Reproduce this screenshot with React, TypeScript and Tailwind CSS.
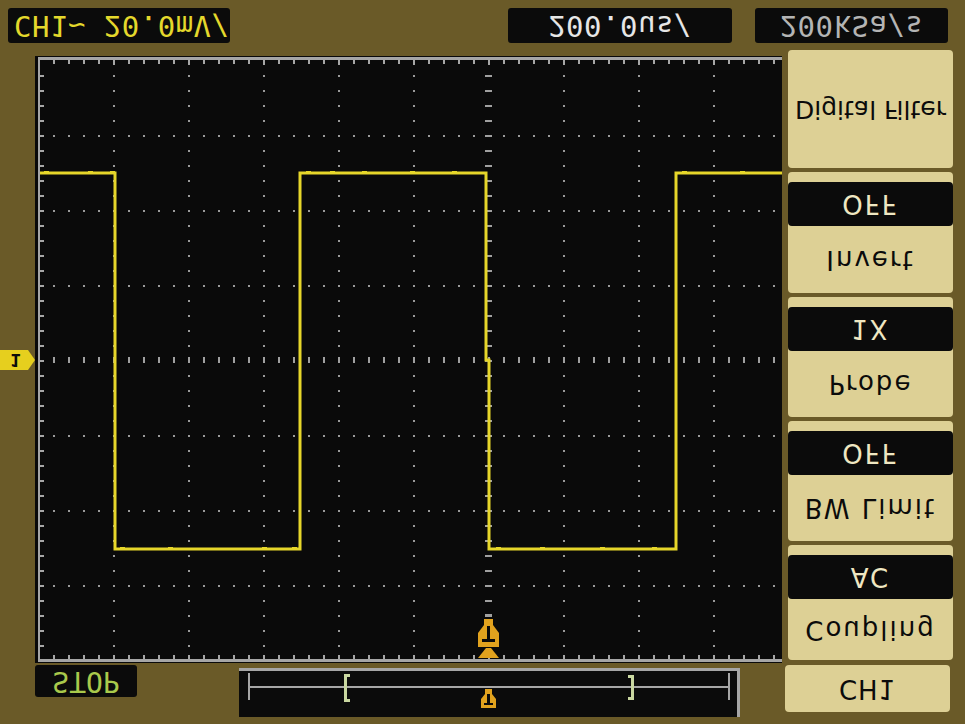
import React from "react";

const flip = "inline-block leading-none whitespace-nowrap [transform:scaleY(-1)]";
const mono = "font-['DejaVu_Sans_Mono',monospace]";
const sans = "font-['DejaVu_Sans',sans-serif]";

const GRID_LEFT = 38;
const GRID_TOP = 60;
const STEP = 15;
const RIGHT = 782;
const BOTTOM = 660;

const subX = Array.from({ length: 50 }, (_, i) => GRID_LEFT + STEP * i).filter((x) => x > GRID_LEFT && x < RIGHT);
const subY = Array.from({ length: 41 }, (_, i) => GRID_TOP + STEP * i).filter((y) => y > GRID_TOP && y < BOTTOM);
const divX = [113, 188, 263, 338, 413, 563, 638, 713];
const divY = [135, 210, 285, 435, 510, 585];

// little glitches riding on the flat parts of the square wave
const bumps: [number, number][] = [
  [44, 171], [88, 171], [110, 171], [306, 171], [330, 171], [362, 171], [410, 171], [452, 171],
  [682, 171], [740, 171], [120, 547], [168, 547], [262, 547], [292, 547], [496, 547], [540, 547],
  [600, 547], [652, 547],
];

function Readout({ children, className, color }: { children: React.ReactNode; className?: string; color: string }) {
  return (
    <div className={`flex h-[35px] items-center rounded-[3px] bg-[#0b0b0b] ${className ?? ""}`}>
      <span className={`${flip} ${mono} text-[29px] tracking-[0.5px]`} style={{ color }}>
        {children}
      </span>
    </div>
  );
}

function MenuItem({ label, value, height, tight }: { label: string; value?: string; height: number; tight?: boolean }) {
  return (
    <div className="flex w-[165px] flex-col overflow-hidden rounded-[4px] bg-[#ddd095]" style={{ height }}>
      {value && (
        <div className="mt-[10px] flex h-[44px] items-center justify-center rounded-[4px] bg-[#0b0b0b]">
          <span className={`${flip} ${sans} text-[26px] tracking-[2px] text-[#efe7c2]`}>{value}</span>
        </div>
      )}
      <div className="flex flex-1 items-center justify-center">
        <span
          className={`${flip} ${sans} text-[#0b0b0b] ${tight ? "text-[25px] tracking-[0px]" : "text-[26px] tracking-[2px]"}`}
        >
          {label}
        </span>
      </div>
    </div>
  );
}

function Screen() {
  return (
    <svg width={747} height={607} viewBox="35 56 747 607" className="mt-[6px] block">
      <rect x={35} y={56} width={747} height={607} fill="#0a0a0a" />
      {/* border */}
      <rect x={38} y={57} width={744} height={3} fill="#a6a6a6" />
      <rect x={38} y={57} width={2} height={605} fill="#a6a6a6" />
      <rect x={38} y={659} width={744} height={3} fill="#a6a6a6" />
      {subX.map((x) => (
        <g key={`bt${x}`}>
          <rect x={x} y={60} width={2} height={(x - GRID_LEFT) % 75 === 0 ? 5 : 4} fill="#a6a6a6" />
          <rect x={x} y={655} width={2} height={4} fill="#a6a6a6" />
        </g>
      ))}
      {subY.map((y) => (
        <rect key={`lt${y}`} x={40} y={y} width={4} height={2} fill="#a6a6a6" />
      ))}
      {/* dotted divisions */}
      {divX.map((x) =>
        subY.map((y) => <rect key={`dx${x}-${y}`} x={x} y={y} width={2} height={2} fill="#9a9a9a" />)
      )}
      {divY.map((y) =>
        subX.map((x) => <rect key={`dy${x}-${y}`} x={x} y={y} width={2} height={2} fill="#9a9a9a" />)
      )}
      {/* center cross */}
      {subX.map((x) => (
        <rect key={`cx${x}`} x={x} y={357} width={2} height={6} fill="#a0a0a0" />
      ))}
      {subY.map((y) => (
        <rect key={`cy${y}`} x={485} y={y} width={7} height={2} fill="#a0a0a0" />
      ))}
      {/* waveform */}
      <path
        d="M40 173 H115 V549 H300 V173 H486 V360 H489 V549 H676 V173 H782"
        fill="none"
        stroke="#e6d62a"
        strokeWidth={3}
      />
      {bumps.map(([x, y]) => (
        <rect key={`b${x}-${y}`} x={x} y={y} width={5} height={3} fill="#e6d62a" />
      ))}
      {/* trigger position marker */}
      <rect x={485} y={614} width={7} height={3} fill="#a0a0a0" />
      <path d="M484 619 H493 V625 L499 633 V647 H478 V633 L484 625 Z" fill="#e1a21e" />
      <path d="M486 648 H491 L499 658 H478 Z" fill="#e1a21e" />
      <rect x={487} y={626} width={3} height={14} fill="#0a0a0a" />
      <rect x={482} y={639} width={13} height={3} fill="#0a0a0a" />
    </svg>
  );
}

function Timeline() {
  return (
    <div className="h-[49px] w-[501px] border-r-[3px] border-t-[3px] border-[#a6a6a6] bg-[#0b0b0b]">
      <svg width={498} height={46} viewBox="239 671 498 46" className="block">
        <rect x={248} y={686} width={482} height={2} fill="#a6a6a6" />
        <rect x={248} y={673} width={2} height={27} fill="#a6a6a6" />
        <rect x={728} y={673} width={2} height={27} fill="#a6a6a6" />
        <path d="M344 674 H350 V677 H347 V699 H350 V702 H344 Z" fill="#c9d7a0" />
        <path d="M628 675 H634 V700 H628 V697 H631 V678 H628 Z" fill="#c9d7a0" />
        <path d="M485 689 H492 V694 L496 699 V708 H481 V699 L485 694 Z" fill="#e1a21e" />
        <rect x={487} y={694} width={3} height={10} fill="#0b0b0b" />
        <rect x={484} y={703} width={9} height={2} fill="#0b0b0b" />
      </svg>
    </div>
  );
}

export default function App() {
  return (
    <div className="flex h-[724px] w-[965px] flex-col overflow-hidden bg-[#6a5a28]">
      <div className="flex h-[50px] items-start pt-[8px]">
        <Readout className="ml-[8px] w-[222px] justify-start pl-[6px]" color="#e4d82c">
          CH1~ 20.0mV/
        </Readout>
        <Readout className="ml-[278px] w-[224px] justify-center" color="#e6e6e6">
          200.0us/
        </Readout>
        <Readout className="ml-[23px] w-[193px] justify-center" color="#b4b4b4">
          200kSa/s
        </Readout>
      </div>

      <div className="flex flex-1">
        <div className="flex w-[782px] flex-col">
          <div className="flex h-[613px]">
            <div className="w-[35px] pt-[300px]">
              <div className="relative flex h-[20px] w-[35px] items-center pl-[10px] [clip-path:polygon(0_0,28px_0,35px_50%,28px_100%,0_100%)] bg-[#e6cf1e]">
                <span className={`${flip} ${mono} text-[18px] font-bold text-[#0b0b0b]`}>1</span>
              </div>
            </div>
            <Screen />
          </div>
          <div className="flex h-[61px] items-start">
            <div className="ml-[35px] mt-[2px] flex h-[32px] w-[102px] items-center justify-center rounded-[3px] bg-[#0b0b0b]">
              <span className={`${flip} ${mono} text-[28px] text-[#a9c94c]`}>STOP</span>
            </div>
            <div className="ml-[102px] mt-[5px]">
              <Timeline />
            </div>
          </div>
        </div>

        <div className="flex w-[183px] flex-col gap-[4px] pl-[6px]">
          <MenuItem label="Digital Filter" height={118} tight />
          <MenuItem label="Invert" value="OFF" height={121} />
          <MenuItem label="Probe" value="1X" height={120} />
          <MenuItem label="BW Limit" value="OFF" height={120} />
          <MenuItem label="Coupling" value="AC" height={115} />
          <div className="ml-[-3px] mt-[1px] flex h-[47px] w-[165px] items-center justify-center rounded-[4px] bg-[#ddd095]">
            <span className={`${flip} ${sans} text-[26px] tracking-[1px] text-[#0b0b0b]`}>CH1</span>
          </div>
        </div>
      </div>
    </div>
  );
}
